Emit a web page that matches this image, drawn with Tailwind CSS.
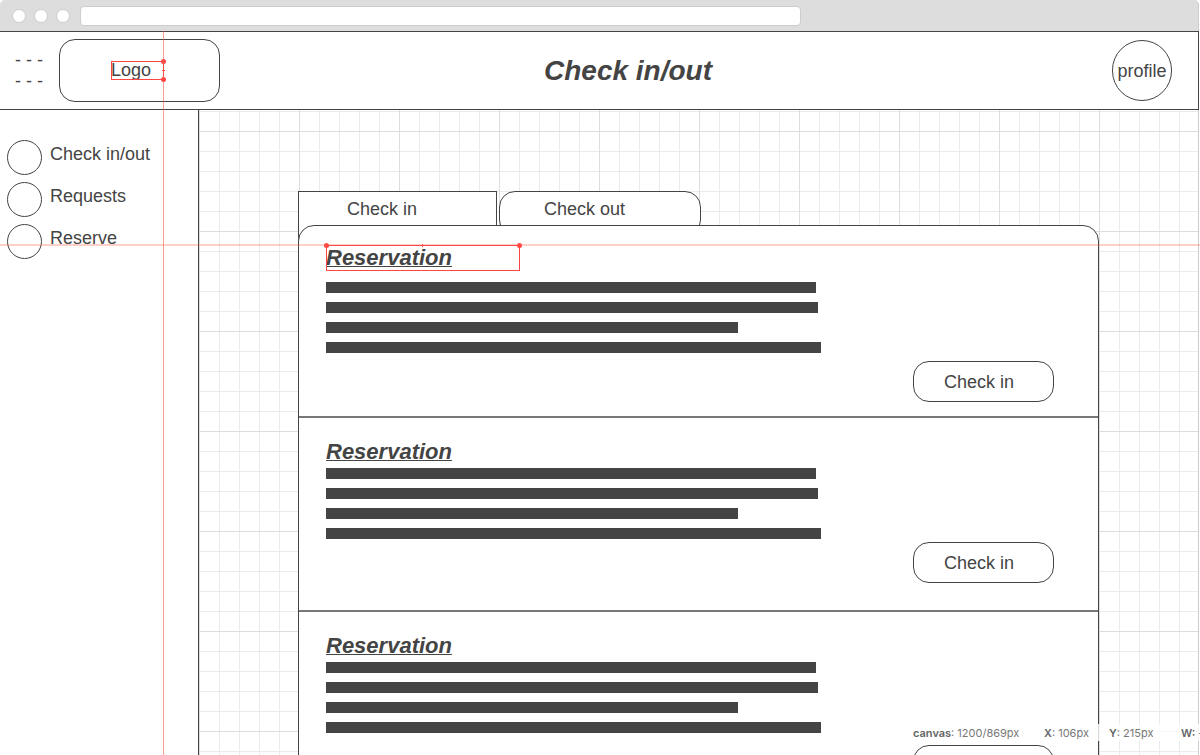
<!DOCTYPE html>
<html lang="en">
<head>
<meta charset="utf-8">
<title>Check in/out</title>
<script src="https://cdn.jsdelivr.net/npm/@tailwindcss/browser@4"></script>
</head>
<body class="bg-white font-['Liberation_Sans',Arial,sans-serif] text-lg text-[#444]">
<div class="relative h-screen overflow-hidden pr-px flex flex-col">

  <!-- Browser chrome -->
  <div class="h-[31px] shrink-0 flex items-center gap-2 pl-3 pt-px bg-[#ddd] border-r border-[#ccc] rounded-t-[5px]">
    <span class="size-3.5 rounded-full bg-white border border-[#ccc]"></span>
    <span class="size-3.5 rounded-full bg-white border border-[#ccc]"></span>
    <span class="size-3.5 rounded-full bg-white border border-[#ccc]"></span>
    <input type="text" aria-label="Address" class="ml-0.5 w-[721px] h-5 px-2 text-sm bg-white border border-[#ccc] rounded-[4px]">
  </div>

  <!-- Header -->
  <header class="h-[79px] shrink-0 grid grid-cols-[1fr_auto_1fr] items-center bg-white border-y border-r border-[#444] pr-[26px]">
    <div class="flex items-center">
      <button type="button" aria-label="Menu" class="w-[59px] pl-[15px] text-left leading-[21px]">- - -<br>- - -</button>
      <a href="#" class="w-[161px] h-[63px] pl-[51px] flex items-center border border-[#444] rounded-2xl">
        <span class="relative w-[53px] h-[19px] leading-[19px] outline outline-[#f44] -outline-offset-1">Logo
          <i class="absolute -top-[2px] -right-[2px] size-[5px] rounded-full bg-[#f44]"></i>
          <i class="absolute -bottom-[2px] -right-[2px] size-[5px] rounded-full bg-[#f44]"></i>
          <i class="absolute top-[9px] -right-px w-[3px] h-px bg-[#f44]"></i>
        </span>
      </a>
    </div>
    <h1 class="pl-[84px] text-[28px] leading-8 font-bold italic">Check in/out</h1>
    <button type="button" class="justify-self-end w-[60px] h-[61px] flex items-center justify-center border border-[#444] rounded-full">profile</button>
  </header>

  <div class="flex flex-1 min-h-0">
    <!-- Sidebar -->
    <nav class="w-[199px] shrink-0 border-r border-[#444] pt-[30px] pl-[7px] bg-white">
      <ul>
        <li><a href="#" class="h-[42px] flex gap-2"><span class="size-[35px] border border-[#444] rounded-full"></span><span class="leading-7">Check in/out</span></a></li>
        <li><a href="#" class="h-[42px] flex gap-2"><span class="size-[35px] border border-[#444] rounded-full"></span><span class="leading-7">Requests</span></a></li>
        <li><a href="#" class="h-[42px] flex gap-2"><span class="size-[35px] border border-[#444] rounded-full"></span><span class="leading-7">Reserve</span></a></li>
      </ul>
    </nav>

    <!-- Canvas grid -->
    <main class="flex-1 min-w-0 border-r border-[#ccc] px-[99px] pt-[81px] bg-[linear-gradient(to_right,#ddd_1px,transparent_1px),linear-gradient(to_bottom,#ddd_1px,transparent_1px),linear-gradient(to_right,#ebebeb_1px,transparent_1px),linear-gradient(to_bottom,#ebebeb_1px,transparent_1px)] [background-size:100px_100px,100px_100px,20px_20px,20px_20px] [background-position:0_0,0_21px,0_0,0_1px]">
      <div class="flex gap-0.5">
        <button type="button" class="w-[199px] h-[50px] pl-12 pb-[15px] text-left bg-white border border-[#444]">Check in</button>
        <button type="button" class="w-[202px] h-[45px] pl-11 pb-2.5 text-left bg-white border border-[#444] rounded-2xl">Check out</button>
      </div>
      <div class="relative -mt-4 bg-white border border-[#444] rounded-t-2xl">
        <section class="h-[192px] pl-[27px] pr-11 pt-[19px] border-b-2 border-[#777]">
          <h2 class="relative w-[194px] text-[22px] leading-[26px] h-[26px] font-bold italic underline decoration-1">Reservation
            <span class="absolute inset-0 border border-[#f44]"></span>
            <i class="absolute -top-[2px] -left-[2px] size-[5px] rounded-full bg-[#f44]"></i>
            <i class="absolute -top-[2px] -right-[2px] size-[5px] rounded-full bg-[#f44]"></i>
            <i class="absolute -top-px left-24 w-px h-[3px] bg-[#f44]"></i>
          </h2>
          <div class="mt-[11px] flex flex-col gap-[9px]">
            <div class="h-[11px] w-[490px] bg-[#444]"></div>
            <div class="h-[11px] w-[492px] bg-[#444]"></div>
            <div class="h-[11px] w-[412px] bg-[#444]"></div>
            <div class="h-[11px] w-[495px] bg-[#444]"></div>
          </div>
          <button type="button" class="mt-2 ml-auto block w-[141px] h-[41px] pl-[30px] text-left border border-[#444] rounded-2xl">Check in</button>
        </section>
        <section class="h-[194px] pl-[27px] pr-11 pt-[21px] border-b-2 border-[#777]">
          <h2 class="text-[22px] leading-[26px] font-bold italic underline decoration-1">Reservation</h2>
          <div class="mt-[3px] flex flex-col gap-[9px]">
            <div class="h-[11px] w-[490px] bg-[#444]"></div>
            <div class="h-[11px] w-[492px] bg-[#444]"></div>
            <div class="h-[11px] w-[412px] bg-[#444]"></div>
            <div class="h-[11px] w-[495px] bg-[#444]"></div>
          </div>
          <button type="button" class="mt-[3px] ml-auto block w-[141px] h-[41px] pl-[30px] text-left border border-[#444] rounded-2xl">Check in</button>
        </section>
        <section class="h-[194px] pl-[27px] pr-11 pt-[21px]">
          <h2 class="text-[22px] leading-[26px] font-bold italic underline decoration-1">Reservation</h2>
          <div class="mt-[3px] flex flex-col gap-[9px]">
            <div class="h-[11px] w-[490px] bg-[#444]"></div>
            <div class="h-[11px] w-[492px] bg-[#444]"></div>
            <div class="h-[11px] w-[412px] bg-[#444]"></div>
            <div class="h-[11px] w-[495px] bg-[#444]"></div>
          </div>
          <button type="button" aria-label="Check in" class="mt-3 ml-auto block w-[141px] h-[41px] border border-[#444] rounded-2xl"></button>
        </section>
      </div>
    </main>
  </div>

  <!-- Alignment guides -->
  <div class="absolute left-[163px] top-[31px] bottom-0 w-px bg-[#f65b48]/60 pointer-events-none"></div>
  <div class="absolute top-[244px] inset-x-0 h-0.5 bg-[#ff6347]/30 pointer-events-none"></div>

  <!-- Canvas status -->
  <div class="absolute right-0 bottom-[14px] w-[287px] h-[17px] flex overflow-hidden whitespace-nowrap bg-white/80 font-[Inter,sans-serif] text-[11px] leading-[18px] text-[#777]">
    <span class="w-[131px] shrink-0"><b class="font-semibold text-[#666]">canvas</b>: 1200/869px</span>
    <span class="w-[65px] shrink-0"><b class="font-semibold text-[#666]">X</b>: 106px</span>
    <span class="w-[72px] shrink-0"><b class="font-semibold text-[#666]">Y</b>: 215px</span>
    <span class="shrink-0"><b class="font-semibold text-[#666]">W:</b> -</span>
  </div>
</div>
</body>
</html>
